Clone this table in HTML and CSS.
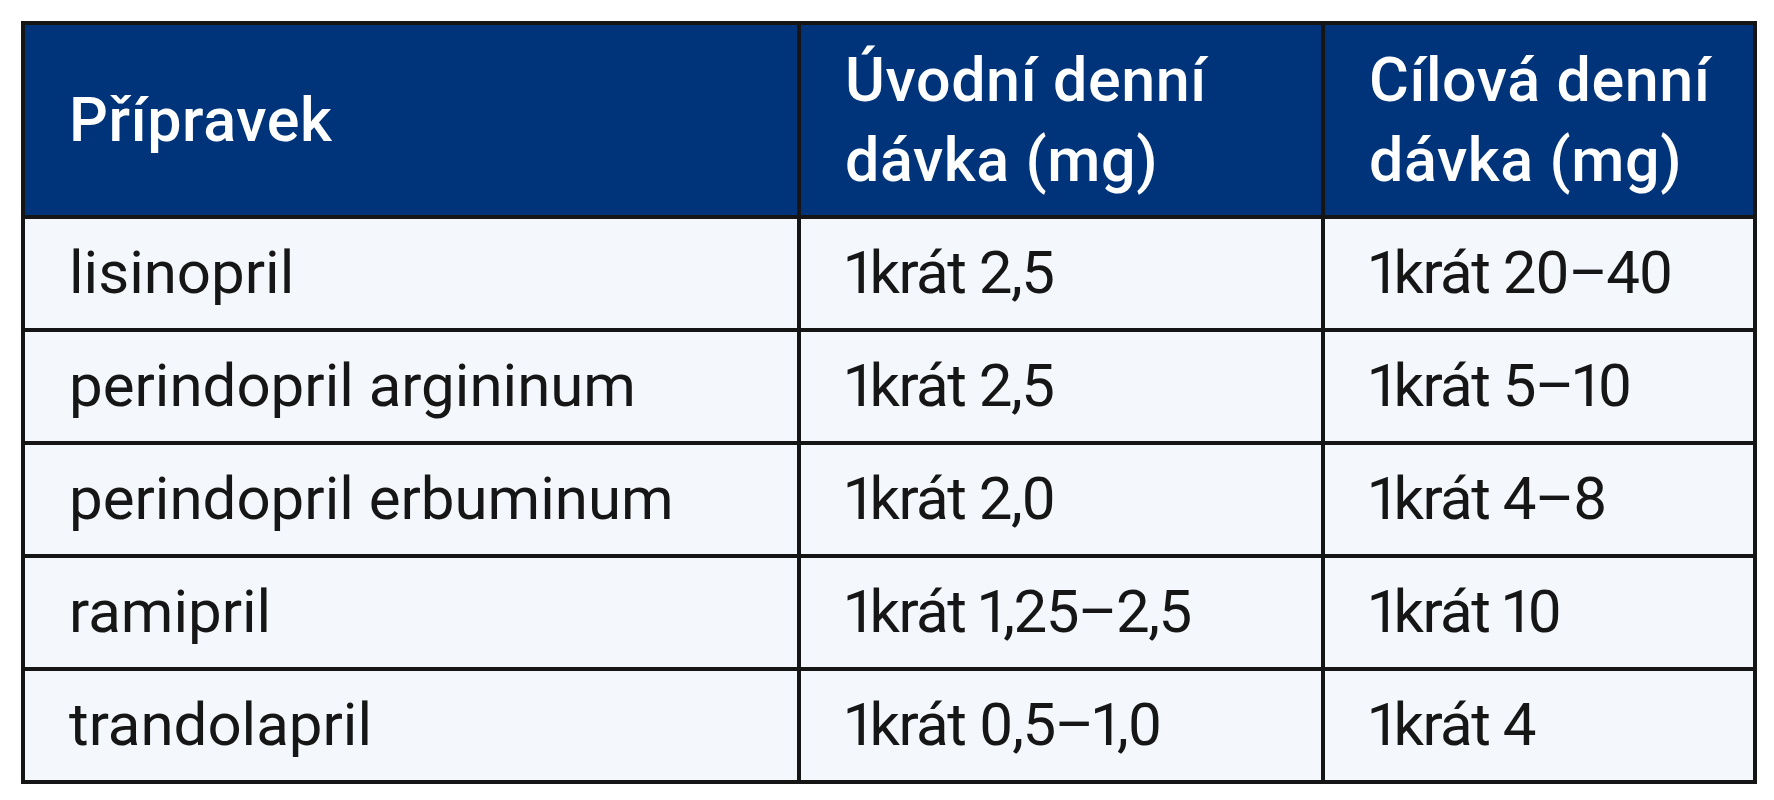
FILE: index.html
```html
<!DOCTYPE html>
<html lang="cs">
<head>
<meta charset="utf-8">
<title>Přípravek – dávkování</title>
<link rel="stylesheet" href="styles.css">
</head>
<body>
<table class="dose-table">
  <colgroup>
    <col class="col-drug">
    <col class="col-start">
    <col class="col-target">
  </colgroup>
  <thead>
    <tr>
      <th>Přípravek</th>
      <th>Úvodní denní<br>dávka (mg)</th>
      <th>Cílová denní<br>dávka (mg)</th>
    </tr>
  </thead>
  <tbody>
    <tr><td>lisinopril</td><td class="dose">1krát 2,5</td><td class="dose">1krát 20–40</td></tr>
    <tr><td>perindopril argininum</td><td class="dose">1krát 2,5</td><td class="dose">1krát 5–10</td></tr>
    <tr><td>perindopril erbuminum</td><td class="dose">1krát 2,0</td><td class="dose">1krát 4–8</td></tr>
    <tr><td>ramipril</td><td class="dose">1krát 1,25–2,5</td><td class="dose">1krát 10</td></tr>
    <tr><td>trandolapril</td><td class="dose">1krát 0,5–1,0</td><td class="dose">1krát 4</td></tr>
  </tbody>
</table>
</body>
</html>
```
FILE: styles.css
```css
html, body {
  margin: 0;
  padding: 0;
  background: #ffffff;
}

body {
  padding: 21px;
  font-family: Roboto, "Noto Sans", sans-serif;
}

.dose-table {
  border-collapse: collapse;
  width: 1732px;
  table-layout: fixed;
  border: 4px solid #151515;
}

.col-drug { width: 776px; }
.col-start { width: 524px; }
.col-target { width: 432px; }

.dose-table th,
.dose-table td {
  border: 4px solid #151515;
  text-align: left;
  vertical-align: middle;
  line-height: 80px;
  white-space: nowrap;
  font-variant-numeric: proportional-nums;
}

.dose-table th {
  background: #00347a;
  color: #ffffff;
  font-size: 61px;
  font-weight: 500;
  letter-spacing: 0.6px;
  padding: 15px 20px 15px 44px;
}

.dose-table td {
  background: #f4f8fd;
  color: #161616;
  font-size: 60px;
  font-weight: 400;
  padding: 14px 20px 15px 44px;
}

.dose-table td.dose {
  letter-spacing: -1.5px;
}
```
